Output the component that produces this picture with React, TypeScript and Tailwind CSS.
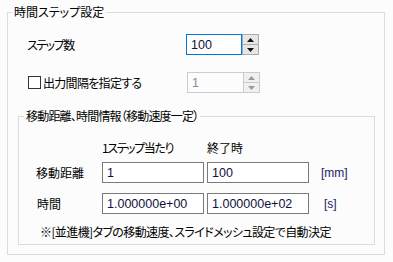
import React from "react";

const jp = "font-['Noto_Sans_CJK_JP','Noto_Sans',sans-serif] [font-feature-settings:'palt']";
const num = "font-['Liberation_Sans','DejaVu_Sans',sans-serif]";

const Arrow: React.FC<{ dir: "up" | "down"; muted?: boolean }> = ({ dir, muted }) => (
  <svg width="7" height="4" viewBox="0 0 7 4">
    <path
      d={dir === "up" ? "M3.5 0 L7 4 L0 4 Z" : "M0 0 L7 0 L3.5 4 Z"}
      fill={muted ? "#9a9a9a" : "#111"}
    />
  </svg>
);

// numeric up/down box
const Spin: React.FC<{ value: string; disabled?: boolean }> = ({ value, disabled }) => (
  <div className="flex h-[21px]">
    <div
      className={`w-[56px] h-full flex items-center pl-[4px] text-[12.5px] ${num} ${
        disabled
          ? "border border-r-0 border-[#cccccc] bg-[#fbfcfb] text-[#8c88a8]"
          : "border border-[#0078d7] bg-white text-[#101040]"
      }`}
    >
      {value}
    </div>
    <div
      className={`w-[17px] h-full flex flex-col border ${
        disabled ? "border-[#cccccc]" : "border-[#acacac]"
      }`}
    >
      <div
        className={`flex-1 flex items-center justify-center border-b ${
          disabled ? "bg-[#f0f0f0] border-[#cccccc]" : "bg-[#e6e6e6] border-[#acacac]"
        }`}
      >
        <Arrow dir="up" muted={disabled} />
      </div>
      <div
        className={`flex-1 flex items-center justify-center ${
          disabled ? "bg-[#f0f0f0]" : "bg-[#e6e6e6]"
        }`}
      >
        <Arrow dir="down" muted={disabled} />
      </div>
    </div>
  </div>
);

const Field: React.FC<{ value: string }> = ({ value }) => (
  <div
    className={`w-[102px] h-[21px] border border-[#7a7a7a] bg-white flex items-center pl-[4px] text-[12.5px] text-[#101040] ${num}`}
  >
    {value}
  </div>
);

export default function App() {
  return (
    <div className={`w-[393px] h-[262px] bg-[#fbfcfb] pt-[5px] pl-[7px] text-[12px] leading-[14px] text-black ${jp}`}>
      <fieldset className="w-[378px] border border-[#dcdcdc] pb-[9px]">
        <legend className="ml-[4px] px-[2px] leading-[14px]">時間ステップ設定</legend>

        {/* step count */}
        <div className="mt-[15px] flex items-center pl-[19px]">
          <span className="w-[159px] tracking-[-1.5px]">ステップ数</span>
          <Spin value="100" />
        </div>

        {/* output interval */}
        <div className="mt-[17px] flex items-center pl-[20px]">
          <div className="w-[159px] flex items-center gap-[2px]">
            <span className="w-[13px] h-[13px] border border-[#333] bg-white" />
            <span className="tracking-[-0.7px]">出力間隔を指定する</span>
          </div>
          <Spin value="1" disabled />
        </div>

        <fieldset className="ml-[10px] mt-[16px] w-[357px] border border-[#dcdcdc] pb-[5px]">
          <legend className="ml-[5px] px-[2px] leading-[14px] tracking-[-0.8px]">
            移動距離、時間情報（移動速度一定）
          </legend>

          <div className="mt-[18px] flex pl-[83px]">
            <span className="w-[105px] tracking-[-1.4px]">1ステップ当たり</span>
            <span>終了時</span>
          </div>

          <div className="mt-[7px] flex items-center pl-[17px]">
            <span className="w-[66px]">移動距離</span>
            <div className="flex gap-[3px]">
              <Field value="1" />
              <Field value="100" />
            </div>
            <span className={`ml-[12px] text-[#1a1a66] ${num}`}>[mm]</span>
          </div>

          <div className="mt-[10px] flex items-center pl-[18px]">
            <span className="w-[65px]">時間</span>
            <div className="flex gap-[3px]">
              <Field value="1.000000e+00" />
              <Field value="1.000000e+02" />
            </div>
            <span className={`ml-[15px] text-[#1a1a66] ${num}`}>[s]</span>
          </div>

          <div className="mt-[11px] pl-[21px] tracking-[-0.6px]">
            ※[並進機]タブの移動速度、スライドメッシュ設定で自動決定
          </div>
        </fieldset>
      </fieldset>
    </div>
  );
}
